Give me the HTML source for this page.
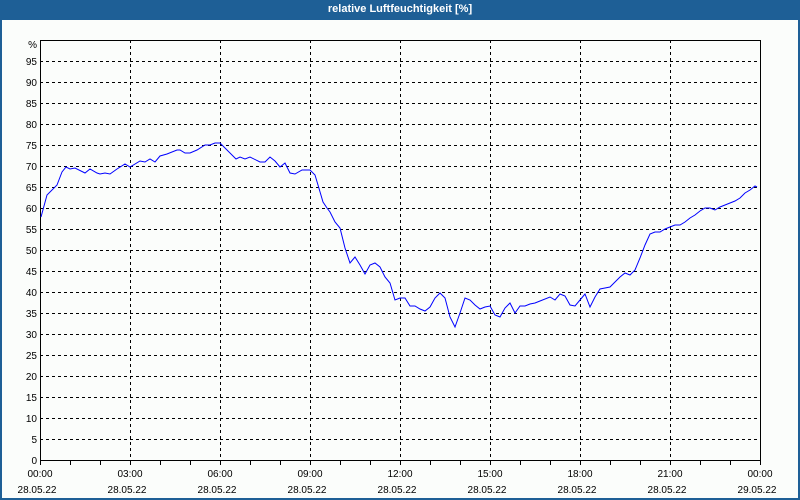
<!DOCTYPE html>
<html><head><meta charset="utf-8"><style>
body{margin:0;width:800px;height:500px;overflow:hidden;background:#1e5f96;font-family:"Liberation Sans",sans-serif}
#t{position:absolute;left:0;top:0;width:800px;height:20px;color:#fff;font-weight:bold;font-size:11px;text-align:center;line-height:19px}
#p{position:absolute;left:2px;top:20px;width:796px;height:478px;background:#fbfdfb}
svg{position:absolute;left:0;top:0}
</style></head><body>
<div id="t">relative Luftfeuchtigkeit [%]</div>
<div id="p"></div>
<svg width="800" height="500" font-family="Liberation Sans, sans-serif" font-size="10" fill="#000">
<g stroke="#000" stroke-dasharray="3,3" stroke-width="1">
<path d="M40 439.5H760M40 418.5H760M40 397.5H760M40 376.5H760M40 355.5H760M40 334.5H760M40 313.5H760M40 292.5H760M40 271.5H760M40 250.5H760M40 229.5H760M40 208.5H760M40 187.5H760M40 166.5H760M40 145.5H760M40 124.5H760M40 103.5H760M40 82.5H760M40 61.5H760"/>
<path d="M130.5 40V460M220.5 40V460M310.5 40V460M400.5 40V460M490.5 40V460M580.5 40V460M670.5 40V460"/>
</g>
<g stroke="#000" fill="none">
<path d="M40.5 40V460.5H760.5V40M40 40.5H760"/>
<path d="M70.5 460v5M100.5 460v5M130.5 460v5M160.5 460v5M190.5 460v5M220.5 460v5M250.5 460v5M280.5 460v5M310.5 460v5M340.5 460v5M370.5 460v5M400.5 460v5M430.5 460v5M460.5 460v5M490.5 460v5M520.5 460v5M550.5 460v5M580.5 460v5M610.5 460v5M640.5 460v5M670.5 460v5M700.5 460v5M730.5 460v5M40.5 460v5M760.5 460v5"/>
</g>
<polyline fill="none" stroke="#0000ff" stroke-width="1" points="41,217 47,195 57,185 62,172 66,167 70,169 75,168 85,173 90,169 97,173 100,174 105,173 110,174 117,169 125,164 130,167 140,161 145,162 150,159 155,162 160,156 167,154 177,150 180,150 185,153 190,153 197,150 205,145 210,145 215,143 220,143 236,159 240,157 245,159 250,157 260,162 265,162 270,157 275,161 280,167 285,163 290,173 295,174 302,170 310,170 315,175 318,185 323,202 327,208 330,212 335,222 340,228 345,248 350,263 355,257 360,265 365,274 370,265 375,263 380,267 385,277 390,283 395,300 400,298 405,298 410,306 415,306 420,309 425,311 430,307 435,298 440,293 445,298 450,317 455,327 460,313 465,298 470,300 475,305 480,309 485,307 490,306 495,315 500,317 505,308 510,303 515,313 520,306 525,306 530,304 535,303 540,301 550,297 555,300 560,294 565,296 570,305 575,306 580,300 585,294 590,307 595,297 600,289 605,288 610,287 615,282 620,277 625,273 630,275 635,270 640,258 645,245 650,234 655,232 660,232 665,229 670,227 675,225 680,225 685,222 690,218 695,215 700,211 705,208 710,208 715,210 720,207 725,205 730,203 735,201 740,198 745,193 750,190 755,186 757,187"/>
<g text-anchor="end">
<text x="37" y="48">%</text><text x="37" y="65">95</text><text x="37" y="86">90</text><text x="37" y="107">85</text><text x="37" y="128">80</text><text x="37" y="149">75</text><text x="37" y="170">70</text><text x="37" y="191">65</text><text x="37" y="212">60</text><text x="37" y="233">55</text><text x="37" y="254">50</text><text x="37" y="275">45</text><text x="37" y="296">40</text><text x="37" y="317">35</text><text x="37" y="338">30</text><text x="37" y="359">25</text><text x="37" y="380">20</text><text x="37" y="401">15</text><text x="37" y="422">10</text><text x="37" y="443">5</text><text x="37" y="464">0</text>
</g>
<g text-anchor="middle">
<text x="40" y="477">00:00</text><text x="130" y="477">03:00</text><text x="220" y="477">06:00</text><text x="310" y="477">09:00</text><text x="400" y="477">12:00</text><text x="490" y="477">15:00</text><text x="580" y="477">18:00</text><text x="670" y="477">21:00</text><text x="760" y="477">00:00</text>
<text x="37" y="493">28.05.22</text><text x="127" y="493">28.05.22</text><text x="217" y="493">28.05.22</text><text x="307" y="493">28.05.22</text><text x="397" y="493">28.05.22</text><text x="487" y="493">28.05.22</text><text x="577" y="493">28.05.22</text><text x="667" y="493">28.05.22</text><text x="757" y="493">29.05.22</text>
</g>
</svg>
</body></html>
